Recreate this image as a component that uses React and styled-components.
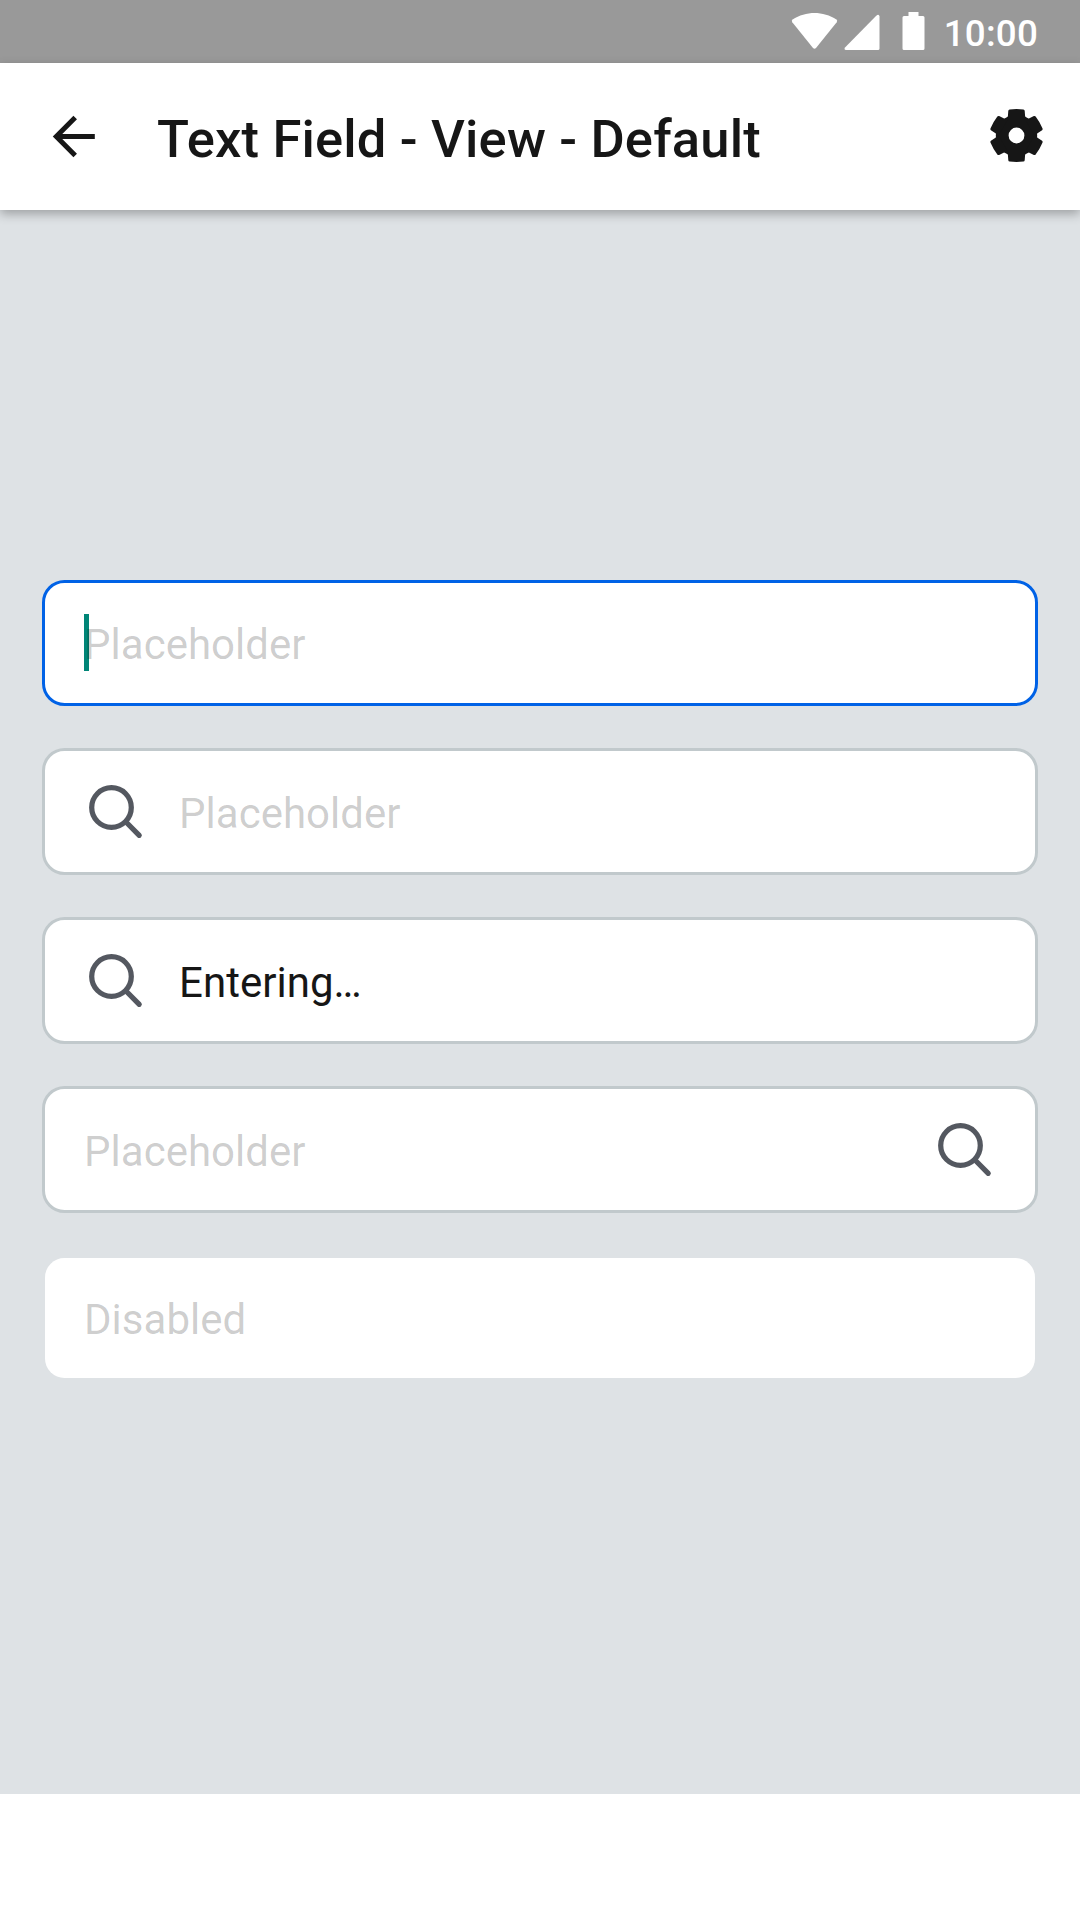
import React from "react";
import styled, { createGlobalStyle, css } from "styled-components";

const Reset = createGlobalStyle`
  *, *::before, *::after { box-sizing: border-box; }
  body { margin: 0; background: #fff; font-family: Roboto, "Noto Sans", sans-serif; }
`;

const Screen = styled.div`
  display: flex;
  flex-direction: column;
  width: 1080px;
  height: 1920px;
  background: #fff;
  overflow: hidden;
`;

const StatusBar = styled.header`
  display: flex;
  flex: none;
  align-items: center;
  justify-content: flex-end;
  height: 63px;
  padding: 3px 42px 0 0;
  background: #999;
  color: #fff;
`;

const StatusIcons = styled.svg`
  flex: none;
  width: 142px;
  height: 50px;
  margin-right: 11px;
`;

const Clock = styled.span`
  font-size: 36.75px;
  font-weight: 500;
  line-height: 43px;
  letter-spacing: 0.2px;
`;

const AppBar = styled.nav`
  display: flex;
  flex: none;
  z-index: 1;
  align-items: center;
  height: 147px;
  padding: 0 32px 0 42px;
  background: #fff;
  color: #161616;
  box-shadow: 0 4px 10px rgba(0, 0, 0, 0.29);
`;

const BarIcon = styled.svg`
  flex: none;
  width: 63px;
  height: 63px;
`;

const Title = styled.h1`
  flex: 1;
  margin: 5px 0 0 52px;
  font-size: 52.5px;
  font-weight: 500;
  line-height: 62px;
  letter-spacing: 0.16px;
  white-space: nowrap;
`;

const Content = styled.main`
  display: flex;
  flex: none;
  flex-direction: column;
  gap: 42px;
  height: 1584px;
  padding: 370px 42px 0;
  background: #dee2e5;
`;

const Field = styled.div`
  display: flex;
  flex: none;
  align-items: center;
  gap: 32px;
  height: ${(p) => (p.$hasIcon ? 127 : 126)}px;
  padding: 0 39px;
  border: 3px solid ${(p) => (p.$focused ? "#0062e6" : p.$disabled ? "transparent" : "#c1c9cc")};
  border-radius: 22.5px;
  background: #fff;
  background-clip: ${(p) => (p.$disabled ? "padding-box" : "border-box")};
`;

const FieldText = styled.span`
  position: relative;
  flex: 1;
  padding-top: 3px;
  color: ${(p) => (p.$entered ? "#161616" : "rgba(0, 0, 0, 0.205)")};
  font-size: 42px;
  line-height: 49px;
  letter-spacing: 0.03px;
  ${(p) =>
    p.$cursor &&
    css`
      &::before {
        content: "";
        position: absolute;
        z-index: 0;
        top: -3px;
        left: 0;
        width: 5px;
        height: 57px;
        background: #008577;
      }
    `}
`;

const Label = styled.span`
  position: relative;
`;

const SearchSvg = styled.svg`
  flex: none;
  width: 63px;
  height: 63px;
`;

function SearchIcon() {
  return (
    <SearchSvg viewBox="0 0 63 63" fill="none" stroke="#545860" strokeWidth="5.25" strokeLinecap="round">
      <circle cx="27.5" cy="27.5" r="19.8" />
      <path d="M42 42 55.2 55.3" />
    </SearchSvg>
  );
}

function TextField({ text, icon, focused, entered, disabled }) {
  return (
    <Field $hasIcon={Boolean(icon)} $focused={focused} $disabled={disabled}>
      {icon === "start" && <SearchIcon />}
      <FieldText $cursor={focused} $entered={entered}>
        <Label>{text}</Label>
      </FieldText>
      {icon === "end" && <SearchIcon />}
    </Field>
  );
}

const teeth = [0, 60, 120, 180, 240, 300];

export default function App() {
  return (
    <>
      <Reset />
      <Screen>
        <StatusBar>
          <StatusIcons viewBox="0 -2 142 50" fill="currentColor">
            <path d="M1.3 12.3Q.1 10.7 1.6 9.6C8 5 16 2.9 23.5 2.9S39 5 45.400 9.600Q46.900 10.700 45.700 12.300L25 38Q23.500 39.500 22 38Z" />
            <path d="M88.500 6.500V38.500Q88.500 40 87 40H55Q52.600 39.500 54 37.500L85 6Q88 3.500 88.500 6.500Z" />
            <path d="M117.500 2H127.500V6H132Q133.500 6 133.500 7.500V38.500Q133.500 40 132 40H113Q111.500 40 111.500 38.500V7.500Q111.500 6 113 6H117.500Z" />
          </StatusIcons>
          <Clock>10:00</Clock>
        </StatusBar>
        <AppBar>
          <BarIcon viewBox="0 0 63 63" fill="none" stroke="currentColor" strokeWidth="5">
            <path d="M52.800 31.500H14.500M33.200 12.500 14.300 31.500 33.200 50.500" />
          </BarIcon>
          <Title>Text Field - View - Default</Title>
          <BarIcon viewBox="-31.500 -30.500 63 63">
            <circle r="14.300" fill="none" stroke="currentColor" strokeWidth="12.800" />
            {teeth.map((angle) => (
              <path
                key={angle}
                transform={`rotate(${angle})`}
                fill="currentColor"
                d="M-11-15.500Q-8.900-17.300-8.600-19.300L-8.200-24.800Q-8-25.900-6.900-26.100Q0-27 6.900-26.100Q8-25.900 8.200-24.800L8.600-19.300Q8.900-17.300 11-15.500Z"
              />
            ))}
          </BarIcon>
        </AppBar>
        <Content>
          <TextField text="Placeholder" focused />
          <TextField text="Placeholder" icon="start" />
          <TextField text="Entering…" icon="start" entered />
          <TextField text="Placeholder" icon="end" />
          <TextField text="Disabled" disabled />
        </Content>
      </Screen>
    </>
  );
}
